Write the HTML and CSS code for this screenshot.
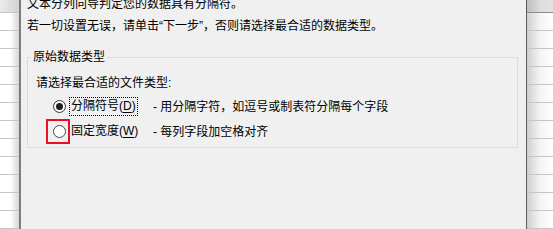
FILE: index.html
```html
<html>
  <head>
    <link rel="stylesheet" href="styles.css">
    <title>文本分列向导</title>
  </head>
  <body>
    <div class="page">
      <div class="sheet sheet-left">
        <div class="sheet-head"></div>
        <div class="sheet-rows"></div>
      </div>

      <div class="dialog">
        <p class="intro intro-first">文本分列向导判定您的数据具有分隔符。</p>
        <p class="intro">若一切设置无误，请单击“下一步”，否则请选择最合适的数据类型。</p>

        <fieldset class="group">
          <legend>原始数据类型</legend>
          <div class="prompt">请选择最合适的文件类型:</div>
          <div class="choices">
            <span class="radio-cell">
              <span class="radio checked"></span>
            </span>
            <span class="choice-label focused">分隔符号(<u>D</u>)</span>
            <span class="choice-desc">- 用分隔字符，如逗号或制表符分隔每个字段</span>

            <span class="radio-cell marked">
              <span class="radio"></span>
            </span>
            <span class="choice-label">固定宽度(<u>W</u>)</span>
            <span class="choice-desc">- 每列字段加空格对齐</span>
          </div>
        </fieldset>
      </div>

      <div class="sheet sheet-right">
        <div class="sheet-head"></div>
        <div class="sheet-rows"></div>
      </div>
    </div>
  </body>
</html>
```

FILE: styles.css
```css
body {
  margin: 0;
  overflow: hidden;
  font-family: "Liberation Sans", "Noto Sans CJK SC", sans-serif;
  font-size: 12px;
  color: #000;
}

.page {
  display: flex;
  width: 553px;
  height: 229px;
  overflow: hidden;
}

/* spreadsheet visible behind the dialog */
.sheet {
  display: flex;
  flex-direction: column;
  flex: none;
}

.sheet-left {
  width: 19px;
  background: linear-gradient(to right, #ffffff 55%, #d6d6d6);
}

.sheet-right {
  width: 26px;
  background: linear-gradient(to right, #cfcfcf, #f4f4f4 50%, #ffffff);
}

.sheet-head {
  height: 12px;
  border-bottom: 1px solid #a8a8a8;
}

.sheet-left .sheet-head {
  background: linear-gradient(to right, #ececec, #d2d2d2);
  border-bottom-color: #c4c4c4;
}

.sheet-right .sheet-head {
  background: linear-gradient(to right, #bdbdbd, #dcdcdc 50%, #e4e4e4);
  border-bottom-color: #8a8a8a;
}

.sheet-rows {
  flex: 1;
  background-image: linear-gradient(to bottom, #c6c6c6 0 1px, transparent 1px);
  background-size: 100% 18px;
  background-position: 0 17px;
}

/* dialog */
.dialog {
  flex: 1;
  background: #f0f0f0;
  border-left: 2px solid #7c7c7c;
  border-right: 1px solid #5e5e5e;
  padding: 0 8px 0 6px;
  overflow: hidden;
}

.intro {
  margin: 0 0 6px 0;
  line-height: 16px;
  white-space: nowrap;
}

.intro-first {
  margin-top: -4px;
}

.group {
  margin: 15px 0 0 0;
  padding: 0 0 3px 8px;
  border: 1px solid #dcdcdc;
  min-width: 0;
}

.group legend {
  margin-left: -5px;
  padding: 0 2px;
  line-height: 16px;
}

.prompt {
  margin-top: 10px;
  line-height: 16px;
}

.choices {
  display: grid;
  grid-template-columns: 23px 84px auto;
  grid-auto-rows: 25px;
  align-items: center;
  margin: 3px 0 0 10px;
}

.radio-cell {
  display: flex;
  align-items: center;
  justify-content: flex-end;
  height: 25px;
  padding-right: 2px;
  border: 2px solid transparent;
  box-sizing: border-box;
  width: 24px;
}

/* red highlight drawn round the second option */
.radio-cell.marked {
  border-color: #e81123;
}

.radio {
  display: flex;
  align-items: center;
  justify-content: center;
  width: 13px;
  height: 13px;
  box-sizing: border-box;
  border: 1px solid #4a4a4a;
  border-radius: 50%;
  background: #fff;
}

.radio.checked {
  border-color: #333;
}

.radio.checked::after {
  content: "";
  width: 7px;
  height: 7px;
  border-radius: 50%;
  background: #1f1f1f;
}

.choice-label {
  justify-self: start;
  padding: 0 1px;
  line-height: 17px;
  border: 1px dotted transparent;
  white-space: nowrap;
}

.choice-label.focused {
  border-color: #000;
}

.choice-label u {
  text-underline-offset: 2px;
}

.choice-desc {
  white-space: nowrap;
  line-height: 16px;
}
```
